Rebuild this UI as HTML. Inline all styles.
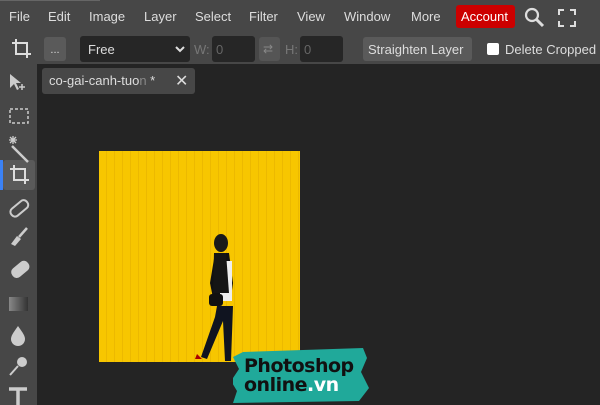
<!DOCTYPE html><html><head><style>
*{margin:0;padding:0;box-sizing:border-box}
body{width:600px;height:405px;overflow:hidden;background:#222;font-family:"Liberation Sans",sans-serif;position:relative}
.a{position:absolute}
.m{top:9px;color:#ddd;font-size:13px}
.top{left:0;top:0;width:600px;height:64px;background:#474747}
.tb{left:0;top:64px;width:37px;height:341px;background:#474747}
.inp{background:#262626;border-radius:3px}
.btn{background:#5a5a5a;border-radius:3px;color:#ddd;font-size:13px}
</style></head><body>
<div class="a top"></div>
<div class="a" style="left:0;top:0;width:100px;height:1px;background:#666"></div>
<div class="a m" style="left:9px">File</div>
<div class="a m" style="left:48px">Edit</div>
<div class="a m" style="left:89px">Image</div>
<div class="a m" style="left:144px">Layer</div>
<div class="a m" style="left:195px">Select</div>
<div class="a m" style="left:249px">Filter</div>
<div class="a m" style="left:297px">View</div>
<div class="a m" style="left:344px">Window</div>
<div class="a m" style="left:411px">More</div>
<div class="a" style="left:456px;top:5px;width:59px;height:23px;background:#c00;border-radius:3px;color:#fff;font-size:13px;padding:4px 0 0 5px">Account</div>
<svg class="a" style="left:524px;top:7px" width="22" height="22"><circle cx="8" cy="8" r="6" fill="none" stroke="#ddd" stroke-width="2.2"/><path d="M12 12l7 7" stroke="#ddd" stroke-width="3"/></svg>
<svg class="a" style="left:558px;top:9px" width="18" height="18" fill="none" stroke="#ddd" stroke-width="2"><path d="M1 6V1h5M12 1h5v5M17 12v5h-5M6 17H1v-5"/></svg>
<svg class="a" style="left:11px;top:38px" width="22" height="22" fill="none" stroke="#ddd" stroke-width="2"><path d="M5 1v15h15M1 5h15v15"/></svg>
<div class="a btn" style="left:44px;top:37px;width:22px;height:24px;text-align:center;font-size:11px;padding-top:7px">...</div>
<div class="a inp" style="left:80px;top:36px;width:110px;height:26px;color:#ddd;font-size:13px;padding:6px 0 0 8px">Free<svg style="position:absolute;right:5px;top:9px" width="10" height="8"><path d="M1 2l4 4 4-4" fill="none" stroke="#ddd" stroke-width="2"/></svg></div>
<div class="a" style="left:194px;top:42px;color:#777;font-size:13px">W:</div>
<div class="a inp" style="left:212px;top:36px;width:43px;height:26px;color:#666;font-size:13px;padding:6px 0 0 4px">0</div>
<div class="a" style="left:259px;top:37px;width:21px;height:24px;background:#555;border-radius:3px;color:#888;font-size:12px;padding:5px 0 0 4px">&#8644;</div>
<div class="a" style="left:285px;top:42px;color:#777;font-size:13px">H:</div>
<div class="a inp" style="left:300px;top:36px;width:43px;height:26px;color:#666;font-size:13px;padding:6px 0 0 4px">0</div>
<div class="a btn" style="left:363px;top:37px;width:109px;height:24px;padding:5px 0 0 5px">Straighten Layer</div>
<div class="a" style="left:487px;top:43px;width:12px;height:12px;background:#fff;border-radius:2px"></div>
<div class="a" style="left:505px;top:42px;color:#ddd;font-size:13px;white-space:nowrap">Delete Cropped</div>
<div class="a tb"></div>
<div class="a" style="left:0;top:160px;width:3px;height:30px;background:#3b82f6"></div>
<div class="a" style="left:3px;top:160px;width:32px;height:30px;background:#5a5a5a;border-radius:3px"></div>
<svg class="a" style="left:0;top:64px" width="37" height="341" fill="#ccc" stroke="#ccc">
<path d="M10 10v14l4-4 3 6 2-1-3-6h5z" stroke="none"/><path d="M22 20v6M19 23h6" stroke-width="1.5"/>
<rect x="10" y="45" width="18" height="14" fill="none" stroke-dasharray="3 2" stroke-width="1.5"/>
<path d="M12 82l16 16" stroke-width="2.5"/><path d="M13 72v8M9 76h8M10 73l6 6M16 73l-6 6" stroke-width="1.3"/>
<path d="M14 101v15h15M10 105h15v15" fill="none" stroke="#ddd" stroke-width="2"/>
<rect x="9" y="140" width="20" height="9" rx="4" transform="rotate(-40 19 144)" fill="none" stroke-width="2"/>
<path d="M11 180l6-8 4 3-6 7z" stroke="none"/><path d="M19 173l8-9" stroke-width="2.5"/>
<rect x="10" y="200" width="20" height="11" rx="5" transform="rotate(-40 20 205)" stroke="none"/>
<defs><linearGradient id="g"><stop offset="0" stop-color="#888"/><stop offset="1" stop-color="#333"/></linearGradient></defs>
<rect x="9" y="233" width="19" height="14" fill="url(#g)" stroke="none"/>
<path d="M18 262c-5 7-7 10-7 13a7 7 0 0014 0c0-3-2-6-7-13z" stroke="none"/>
<circle cx="22" cy="298" r="5" stroke="none"/><path d="M18 302l-8 9" stroke-width="2"/>
<path d="M9 325h18M18 325v16" stroke-width="3.5" fill="none"/>
</svg>
<div class="a" style="left:37px;top:64px;width:563px;height:341px;background:#242424"></div>
<div class="a" style="left:42px;top:68px;width:153px;height:26px;background:#474747;border-radius:3px;color:#ddd;font-size:13px;padding:5px 0 0 7px;white-space:nowrap">co-gai-canh-tuo<span style="color:#888">n</span> *<span style="position:absolute;left:133px;top:3px;font-size:16px">&#10005;</span></div>
<div class="a" style="left:99px;top:151px;width:201px;height:211px;background:repeating-linear-gradient(90deg,#f7c600 0 7px,#ecb900 7px 8px);"></div>
<svg class="a" style="left:99px;top:151px" width="201" height="211">
<ellipse cx="122" cy="92" rx="7" ry="9" fill="#1a1a1a"/>
<path d="M116 102h14l4 30-2 15h-18l-3-15z" fill="#111"/>
<rect x="121" y="110" width="12" height="40" fill="#eee"/>
<path d="M115 102h12l3 40h-16z" fill="#151515"/>
<rect x="110" y="143" width="14" height="12" rx="3" fill="#111"/>
<path d="M118 155h16l-2 55h-6l-2-40-16 38-6-2 14-40z" fill="#101420"/>
<path d="M98 203l5 5h-7z" fill="#a00"/>
</svg>
<svg class="a" style="left:233px;top:348px" width="140" height="55"><path d="M10 4l120-4 4 10-6 14 8 16-10 13-126 2 4-12-6-10 8-12-6-12z" fill="#20a99a"/></svg>
<div class="a" style="left:244px;top:357px;font:bold 19px 'DejaVu Sans',sans-serif;color:#111;line-height:19px;letter-spacing:-0.5px">Photoshop</div>
<div class="a" style="left:244px;top:376px;font:bold 19px 'DejaVu Sans',sans-serif;color:#111;line-height:19px;letter-spacing:-0.5px">online<span style="color:#fff">.vn</span></div>
</body></html>
